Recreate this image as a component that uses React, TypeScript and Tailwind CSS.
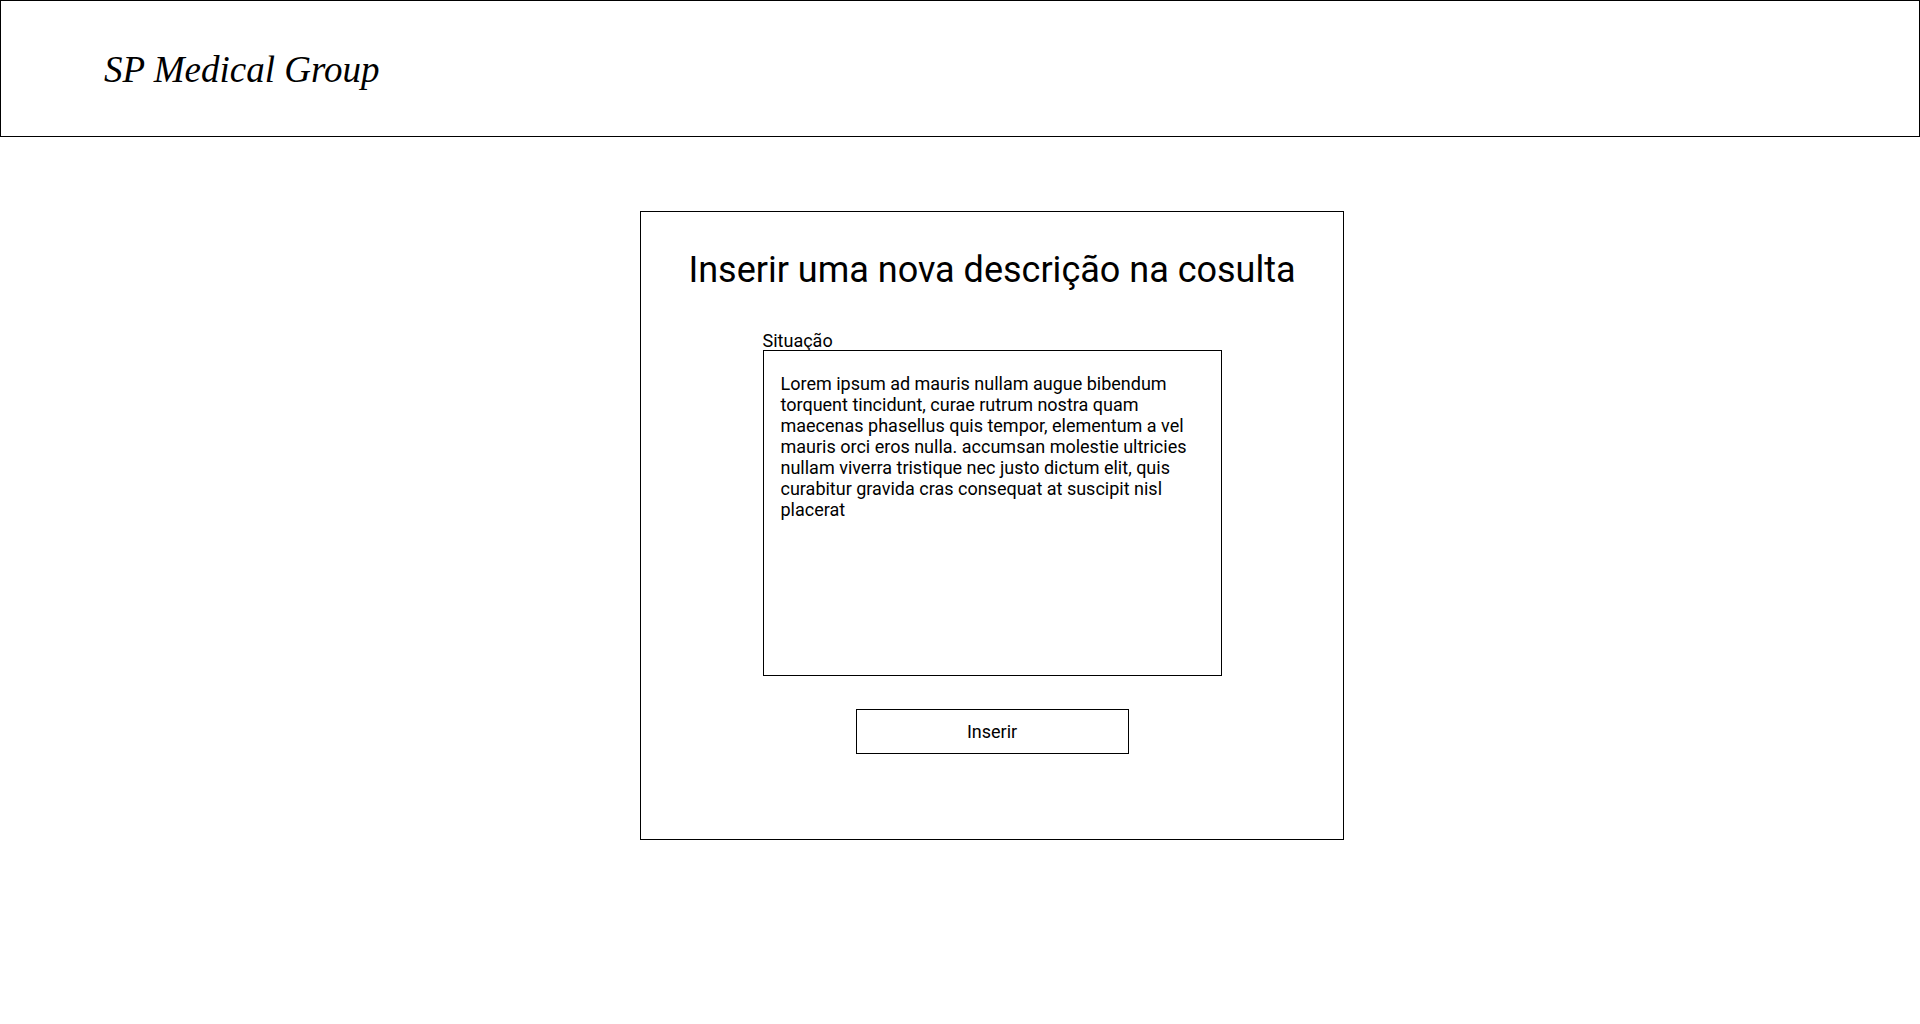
import { useState } from "react";

const lorem =
  "Lorem ipsum ad mauris nullam augue bibendum torquent tincidunt, curae rutrum nostra quam maecenas phasellus quis tempor, elementum a vel mauris orci eros nulla. accumsan molestie ultricies nullam viverra tristique nec justo dictum elit, quis curabitur gravida cras consequat at suscipit nisl placerat";

export default function App() {
  const [descricao, setDescricao] = useState(lorem);

  return (
    <div className="min-h-[1024px] bg-white font-['Roboto',sans-serif] text-black">
      <header className="flex h-[137px] items-center border border-black pl-[103px] pt-[3px]">
        <h1 className="font-['Liberation_Serif',serif] text-[37px] italic leading-normal">
          SP Medical Group
        </h1>
      </header>

      <main className="pt-[74px]">
        <section className="ml-[640px] flex h-[629px] w-[704px] flex-col items-center border border-black pt-[37px]">
          <h2 className="text-[36px] leading-[42px]">
            Inserir uma nova descrição na cosulta
          </h2>

          <form
            className="mt-[40px] flex w-[459px] flex-col"
            onSubmit={(e) => e.preventDefault()}
          >
            <label htmlFor="descricao" className="text-[18px] leading-[19px]">
              Situação
            </label>
            <textarea
              id="descricao"
              value={descricao}
              onChange={(e) => setDescricao(e.target.value)}
              className="h-[326px] w-[459px] resize-none border border-black pl-[17px] pr-[14px] pt-[22px] text-[18px] leading-[21px] outline-none"
            />
            <button
              type="submit"
              className="mx-auto mt-[33px] h-[45px] w-[273px] border border-black text-[18px]"
            >
              Inserir
            </button>
          </form>
        </section>
      </main>
    </div>
  );
}
